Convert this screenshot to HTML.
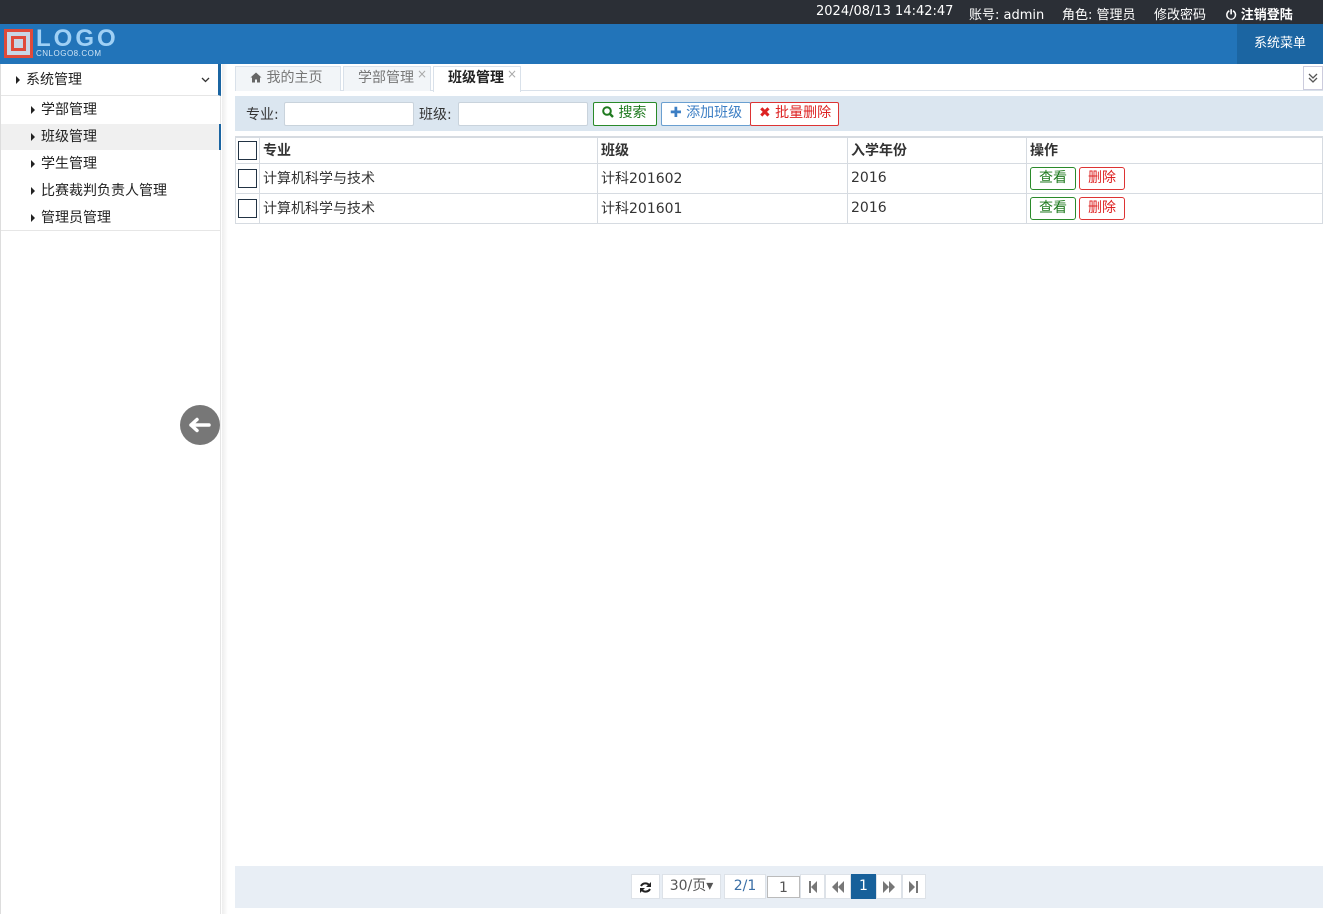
<!DOCTYPE html>
<html><head><meta charset="utf-8"><style>
*{margin:0;padding:0;box-sizing:border-box}
body{width:1323px;height:914px;position:relative;overflow:hidden;background:#fff;font-family:"DejaVu Sans","Noto Sans CJK SC",sans-serif;font-size:14px;color:#333}
.abs{position:absolute}
#top{left:0;top:0;width:1323px;height:24px;background:#2b2f36;color:#fff;font-size:13px}
#top span{position:absolute;top:4px}
#hdr{left:0;top:24px;width:1323px;height:40px;background:#2274b9}
#menu{right:0;top:0;width:86px;height:40px;background:#1b65a2;color:#fff;text-align:center;line-height:40px;font-size:13px}
#side{left:0;top:64px;width:221px;height:850px;border-right:1px solid #e6e6e6;border-left:1px solid #ddd}
.si{position:absolute;left:0;width:220px;font-size:14px;color:#222}
.tri{display:inline-block;width:0;height:0;border-left:4px solid #222;border-top:4px solid transparent;border-bottom:4px solid transparent;margin-right:6px;vertical-align:0px}
.tab{position:absolute;top:66px;height:25px;border:1px solid #d9e1ea;border-bottom:none;background:#f2f5f8;color:#777;font-size:14px;line-height:23px;padding-left:14px}
.x{position:absolute;top:-4px;right:3px;color:#aaa;font-size:12px}
#bar{left:235px;top:96px;width:1088px;height:35px;background:#dbe6f0}
.inp{position:absolute;top:6px;width:130px;height:24px;background:#fff;border:1px solid #c9d3dc;border-radius:2px}
.btn{position:absolute;top:6px;height:24px;border:1px solid;border-radius:2px;line-height:21px;font-size:14px;padding:0 8px;background:#fff;white-space:nowrap}
table{position:absolute;left:235px;top:136px;width:1088px;border-collapse:collapse;font-size:14px}
td{border:1px solid #d6dbe1;height:30px;padding-left:3px}
tr.h td{height:26px;font-weight:bold;background:#fff;border-top:2px solid #d6dbe1}
.cb{display:inline-block;width:19px;height:19px;border:1.5px solid #234;vertical-align:middle;margin-left:-1px}
.sb{display:inline-block;height:23px;line-height:21px;border:1px solid;border-radius:3px;padding:0 8px;margin-right:3px;background:#fff}
#foot{left:235px;top:866px;width:1088px;height:42px;background:#e8eef5}
.pg{position:absolute;top:8px;height:25px;background:#fff;border:1px solid #dde2e8;text-align:center;line-height:23px;font-size:14px;color:#555}
.pg svg{margin-top:6px}
</style></head><body>
<div id="top" class="abs">
<span style="left:816px">2024/08/13 14:42:47</span>
<span style="left:969px">账号: admin</span>
<span style="left:1062px">角色: 管理员</span>
<span style="left:1154px">修改密码</span>
<span style="left:1226px;font-weight:bold">⏻ 注销登陆</span>
</div>
<div id="hdr" class="abs">
<div class="abs" style="left:4px;top:5px;width:29px;height:29px;border:3px solid #e04a3a;background:#c8d6e6"><div style="margin:4px;width:15px;height:15px;border:3px solid #e04a3a"></div></div>
<div class="abs" style="left:36px;top:2px;color:#9fd0f5;font-size:24px;font-weight:bold;letter-spacing:1px;line-height:26px;font-family:'Liberation Sans',sans-serif;letter-spacing:3px">LOGO</div>
<div class="abs" style="left:36px;top:26px;color:#cfe4f5;font-size:8px;line-height:8px;font-family:'Liberation Sans',sans-serif;letter-spacing:0.5px">CNLOGO8.COM</div>
<div id="menu" class="abs">系统菜单</div>
</div>
<div id="side" class="abs">
<div class="si" style="top:0;height:32px;line-height:32px;padding-left:15px;border-right:3px solid #1b65a2;border-bottom:1px solid #e6e6e6"><span class="tri"></span>系统管理<svg style="position:absolute;right:8px;top:13px" width="9" height="6"><path d="M1 1L4.5 4.5L8 1" stroke="#333" stroke-width="1.3" fill="none"/></svg></div>
<div class="si" style="top:33px;height:26px;line-height:26px;padding-left:30px"><span class="tri"></span>学部管理</div>
<div class="si" style="top:60px;height:26px;line-height:26px;padding-left:30px;background:#f0f0f0;border-right:2px solid #1b65a2"><span class="tri"></span>班级管理</div>
<div class="si" style="top:87px;height:26px;line-height:26px;padding-left:30px"><span class="tri"></span>学生管理</div>
<div class="si" style="top:114px;height:26px;line-height:26px;padding-left:30px"><span class="tri"></span>比赛裁判负责人管理</div>
<div class="si" style="top:141px;height:26px;line-height:26px;padding-left:30px;border-bottom:1px solid #e6e6e6"><span class="tri"></span>管理员管理</div>
</div>
<div class="abs" style="left:222px;top:64px;width:6px;height:850px;background:linear-gradient(90deg,#eee,#fff)"></div>
<div class="abs" style="left:180px;top:405px;width:40px;height:40px;border-radius:50%;background:#777"><svg width="40" height="40"><path d="M11 20H29M11 20L17 14.5M11 20L17 25.5" stroke="#fff" stroke-width="3.5" fill="none" stroke-linecap="round"/></svg></div>
<div class="abs" style="left:235px;top:90px;width:1088px;height:1px;background:#d9e1ea"></div>
<div class="tab" style="left:235px;width:106px"><svg width="12" height="11" style="vertical-align:-1px"><path d="M6 0.5L0.5 5.5H2V10.5H5V7.5H7V10.5H10V5.5H11.5Z" fill="#666"/></svg> 我的主页</div>
<div class="tab" style="left:343px;width:88px">学部管理<span class="x">×</span></div>
<div class="tab" style="left:433px;width:88px;background:#fff;height:26px;color:#222;font-weight:bold">班级管理<span class="x" style="font-weight:normal">×</span></div>
<div class="abs" style="left:1303px;top:66px;width:20px;height:24px;border:1px solid #ccd;background:#fff"><svg width="18" height="22"><path d="M5 7L9 11L13 7M5 11L9 15L13 11" stroke="#555" stroke-width="1.3" fill="none"/></svg></div>
<div id="bar" class="abs">
<span class="abs" style="left:11px;top:8px">专业:</span><div class="inp" style="left:49px"></div>
<span class="abs" style="left:184px;top:8px">班级:</span><div class="inp" style="left:223px"></div>
<div class="btn" style="left:358px;width:64px;border-color:#2a8a2a;color:#1f7a1f"><svg width="12" height="12" style="vertical-align:-1px"><circle cx="5" cy="5" r="3.8" stroke="#1f7a1f" stroke-width="2" fill="none"/><path d="M8 8L11 11" stroke="#1f7a1f" stroke-width="2.4"/></svg> 搜索</div>
<div class="btn" style="left:426px;border-color:#6a9fd0;color:#3c7ec4;width:90px"><b>✚</b> 添加班级</div>
<div class="btn" style="left:515px;border-color:#d33;color:#d22;width:89px"><b>✖</b> 批量删除</div>
</div>
<table>
<tr class="h"><td style="width:24px"><span class="cb"></span></td><td style="width:338px">专业</td><td style="width:250px">班级</td><td style="width:179px">入学年份</td><td>操作</td></tr>
<tr><td><span class="cb"></span></td><td>计算机科学与技术</td><td>计科201602</td><td>2016</td><td><span class="sb" style="border-color:#2a8a2a;color:#1f7a1f">查看</span><span class="sb" style="border-color:#d33;color:#d22">删除</span></td></tr>
<tr><td><span class="cb"></span></td><td>计算机科学与技术</td><td>计科201601</td><td>2016</td><td><span class="sb" style="border-color:#2a8a2a;color:#1f7a1f">查看</span><span class="sb" style="border-color:#d33;color:#d22">删除</span></td></tr>
</table>
<div id="foot" class="abs">
<div class="pg" style="left:396px;width:29px"><svg width="13" height="13"><path d="M10.5 4.5A5 5 0 0 0 2 5M2.5 8.5A5 5 0 0 0 11 8" stroke="#222" stroke-width="2" fill="none"/><path d="M12 1V6H7Z M1 12V7H6Z" fill="#222"/></svg></div>
<div class="pg" style="left:427px;width:59px">30/页▾</div>
<div class="pg" style="left:489px;width:42px;color:#3a6ea5">2/1</div>
<div class="pg" style="left:532px;width:33px;top:10px;height:22px;border-color:#bbb">1</div>
<div class="pg" style="left:565px;width:25px"><svg width="10" height="12"><path d="M1 0H3V12H1Z M9 0V12L3 6Z" fill="#777"/></svg></div>
<div class="pg" style="left:590px;width:26px"><svg width="13" height="12"><path d="M6 0V12L0 6Z M12 0V12L6 6Z" fill="#777"/></svg></div>
<div class="pg" style="left:616px;width:25px;background:#17609a;color:#fff;border-color:#17609a">1</div>
<div class="pg" style="left:641px;width:26px"><svg width="13" height="12"><path d="M0 0V12L6 6Z M6 0V12L12 6Z" fill="#777"/></svg></div>
<div class="pg" style="left:667px;width:24px"><svg width="10" height="12"><path d="M0 0V12L6 6Z M7 0H9V12H7Z" fill="#777"/></svg></div>
</div>
</body></html>
